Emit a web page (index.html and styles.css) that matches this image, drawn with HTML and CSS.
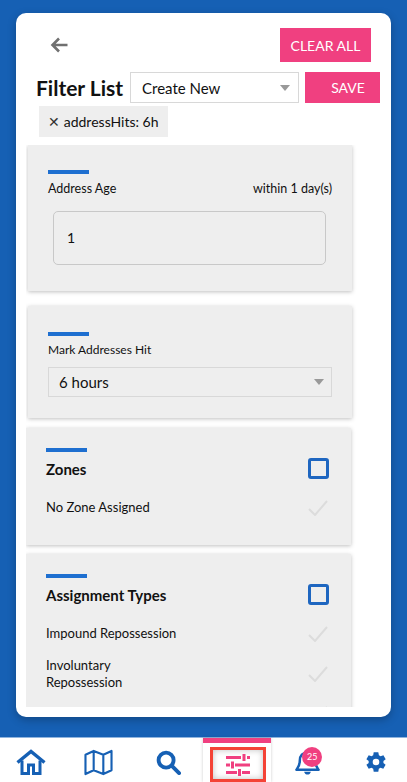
FILE: index.html
```html
<!DOCTYPE html>
<html lang="en">
<head>
  <meta charset="UTF-8" />
  <meta name="viewport" content="width=device-width, initial-scale=1.0" />
  <title>Filter List</title>
  <link rel="stylesheet" href="styles.css">
</head>
<body>
  <div class="screen">
    <main class="panel">
      <div class="top-row">
        <svg class="back" viewBox="0 0 18 16" width="18" height="16"><path d="M17.500 8H2.500M9 1.500 2.500 8 9 14.500" fill="none" stroke="#707070" stroke-width="2.600"/></svg>
        <button class="btn btn-clear">CLEAR ALL</button>
      </div>
      <div class="filter-row">
        <h1 class="filter-title">Filter List</h1>
        <div class="select select-new">
          <span>Create New</span>
          <i class="caret"></i>
        </div>
        <button class="btn btn-save">SAVE</button>
      </div>
      <div class="chip"><span class="chip-x">✕</span><span>addressHits: 6h</span></div>

      <div class="list">
        <section class="card card-age">
          <div class="bar"></div>
          <div class="label-row"><span>Address Age</span><span>within 1 day(s)</span></div>
          <div class="age-input">1</div>
        </section>

        <section class="card card-hit">
          <div class="bar"></div>
          <div class="label-row label-hit"><span>Mark Addresses Hit</span></div>
          <div class="select select-hours">
            <span>6 hours</span>
            <i class="caret"></i>
          </div>
        </section>

        <section class="card card-check card-zones">
          <div class="bar"></div>
          <div class="check-head"><h2>Zones</h2><i class="box"></i></div>
          <div class="check-row">
            <span>No Zone Assigned</span>
            <svg class="tick" viewBox="0 0 20 16" width="20" height="16"><path d="M1 9l6 6L19 1" fill="none" stroke="#dcdcdc" stroke-width="2"/></svg>
          </div>
        </section>

        <section class="card card-check card-types">
          <div class="bar"></div>
          <div class="check-head"><h2>Assignment Types</h2><i class="box"></i></div>
          <div class="check-row">
            <span>Impound Repossession</span>
            <svg class="tick" viewBox="0 0 20 16" width="20" height="16"><path d="M1 9l6 6L19 1" fill="none" stroke="#dcdcdc" stroke-width="2"/></svg>
          </div>
          <div class="check-row">
            <span>Involuntary<br>Repossession</span>
            <svg class="tick" viewBox="0 0 20 16" width="20" height="16"><path d="M1 9l6 6L19 1" fill="none" stroke="#dcdcdc" stroke-width="2"/></svg>
          </div>
          <div class="check-row">
            <span></span>
            <svg class="tick" viewBox="0 0 20 16" width="20" height="16"><path d="M1 9l6 6L19 1" fill="none" stroke="#dcdcdc" stroke-width="2"/></svg>
          </div>
        </section>
      </div>
    </main>
  </div>

  <nav class="tabs">
    <a class="tab">
      <svg viewBox="0 0 30 26" width="30" height="26"><path d="M1.500 13.500 15 2.500l13.500 11" fill="none" stroke="#1660b4" stroke-width="3.400"/><path d="M6 11.500V24.500h6.500V16h5v8.500H24V11.500" fill="none" stroke="#1660b4" stroke-width="3"/></svg>
    </a>
    <a class="tab">
      <svg viewBox="0 0 30 28" width="29" height="27"><path d="M1.500 6 10 2l10 4 8.500-4v20L20 26l-10-4-8.500 4zM10 2v20M20 6v20" fill="none" stroke="#1660b4" stroke-width="2.200" stroke-linejoin="round"/></svg>
    </a>
    <a class="tab">
      <svg viewBox="0 0 26 26" width="25" height="25"><circle cx="10.500" cy="10.500" r="7.800" fill="none" stroke="#1660b4" stroke-width="4"/><path d="M16.500 16.500 24 24" stroke="#1660b4" stroke-width="4" stroke-linecap="round"/></svg>
    </a>
    <a class="tab tab-active">
      <span class="focus">
        <svg viewBox="0 0 24 24" width="24" height="24"><path d="M0 4.500h15M21 4.500h3M0 12h4M9 12h15M0 19.500h11M16 19.500h8M18 1v7M6.500 8.500v7M13.500 16v7" fill="none" stroke="#f04080" stroke-width="3"/></svg>
      </span>
    </a>
    <a class="tab tab-bell">
      <svg viewBox="0 0 26 26" width="25" height="25"><path d="M13 2.500c-5 0-8 3.500-8 8.500 0 5.500-2 7.500-3.500 9.500h23C23 18.500 21 16.500 21 11c0-5-3-8.500-8-8.500z" fill="none" stroke="#1660b4" stroke-width="2.600" stroke-linejoin="round"/><path d="M9.500 22.500c.5 2 2 3 3.500 3s3-1 3.500-3z" fill="#1660b4"/></svg>
      <span class="badge">25</span>
    </a>
    <a class="tab tab-gear">
      <svg viewBox="0 0 24 24" width="24" height="24"><path fill="#1660b4" fill-rule="evenodd" d="M19.400 13a7.600 7.600 0 0 0 0-2l2.300-1.800-2.300-4-2.800 1.100a7.600 7.600 0 0 0-1.700-1L14.300 2.300H9.700l-.5 3a7.600 7.600 0 0 0-1.700 1L4.700 5.200l-2.300 4L4.700 11a7.600 7.600 0 0 0 0 2l-2.300 1.800 2.300 4 2.800-1.100a7.600 7.600 0 0 0 1.700 1l.5 3h4.600l.5-3a7.600 7.600 0 0 0 1.700-1l2.800 1.100 2.300-4zM12 15.300a3.300 3.300 0 1 1 0-6.600 3.300 3.300 0 0 1 0 6.600z"/></svg>
    </a>
  </nav>
</body>
</html>
```
FILE: styles.css
```css
* {
  box-sizing: border-box;
}
html, body {
  margin: 0;
  height: 100%;
}
body {
  width: 407px;
  height: 782px;
  overflow: hidden;
  font-family: Lato, "Open Sans", sans-serif;
  color: #111;
  background: #1660b4;
  display: flex;
  flex-direction: column;
}
.screen {
  height: 737px;
  padding: 13px 16px 20px;
}
.panel {
  height: 704px;
  background: #fff;
  border-radius: 10px;
  box-shadow: 0 3px 8px rgba(0, 0, 0, 0.25);
  padding: 15px 0 10px 10px;
  display: flex;
  flex-direction: column;
  overflow: hidden;
}
.top-row {
  display: flex;
  justify-content: space-between;
  align-items: center;
  height: 34px;
  padding: 0 20px 0 24px;
}
.btn {
  border: none;
  background: #f04080;
  color: #fff;
  font-family: inherit;
  font-size: 14px;
  padding: 0;
  height: 34px;
}
.btn-clear {
  width: 91px;
}
.filter-row {
  display: flex;
  align-items: center;
  margin-top: 10px;
  height: 31px;
  padding-left: 10px;
}
.filter-title {
  margin: 0;
  font-size: 21px;
  font-weight: 700;
  width: 94px;
  white-space: nowrap;
}
.select {
  display: flex;
  align-items: center;
  justify-content: space-between;
  border: 1px solid #d8d8d8;
}
.select-new {
  width: 169px;
  height: 31px;
  padding: 0 8px 0 11px;
  font-size: 15px;
  background: #fff;
}
.caret {
  width: 0;
  height: 0;
  border-left: 5.500px solid transparent;
  border-right: 5.500px solid transparent;
  border-top: 6px solid #999;
}
.btn-save {
  width: 75px;
  height: 31px;
  margin-left: 6px;
  padding-left: 11px;
}
.chip {
  align-self: flex-start;
  margin: 3px 0 0 13px;
  width: 129px;
  height: 31px;
  background: #eee;
  font-size: 14px;
  padding-left: 9px;
  white-space: nowrap;
  display: flex;
  align-items: center;
  gap: 4px;
}
.chip-x {
  font-family: "DejaVu Sans", sans-serif;
  font-size: 14px;
  color: #333;
}
.list {
  flex: 1;
  margin-top: 8px;
  overflow: hidden;
  display: flex;
  flex-direction: column;
}
.card {
  flex: none;
  background: #eee;
  width: 324px;
  margin-left: 2px;
  box-shadow: 0 1px 4px rgba(0, 0, 0, 0.25);
  padding: 25px 20px 0;
}
.bar {
  width: 41px;
  height: 4px;
  background: #1e6fd0;
}
.label-row {
  display: flex;
  justify-content: space-between;
  font-size: 12.500px;
  margin-top: 6px;
  line-height: 17px;
}
.label-hit {
  font-size: 12px;
  margin-top: 5px;
}
.card-age {
  height: 146px;
}
.age-input {
  width: 273px;
  height: 54px;
  margin: 14px 0 0 5px;
  border: 1px solid #c8c8c8;
  border-radius: 5px;
  padding-left: 13px;
  line-height: 52px;
  font-size: 14px;
}
.card-hit {
  height: 112px;
  margin-top: 15px;
  padding-top: 26px;
}
.select-hours {
  height: 30px;
  margin-top: 9px;
  padding: 0 7px 0 10px;
  font-size: 15px;
  border-width: 1.500px;
}
.card-check {
  width: 325px;
  margin-left: 0;
  padding: 20px 20px 0 20px;
}
.card-zones {
  height: 117px;
  margin-top: 10px;
}
.card-types {
  margin-top: 9px;
  height: 200px;
}
.check-head {
  display: flex;
  justify-content: space-between;
  align-items: center;
  padding-right: 2px;
  margin-top: 6px;
  height: 21px;
}
.check-head h2 {
  margin: 0;
  font-size: 15px;
  font-weight: 700;
}
.box {
  width: 21px;
  height: 21px;
  border: 3px solid #1e66c0;
  border-radius: 3px;
}
.check-row {
  display: flex;
  justify-content: space-between;
  align-items: center;
  padding-right: 3px;
  font-size: 13px;
  line-height: 17px;
  margin-top: 20px;
}
.check-row + .check-row {
  margin-top: 15px;
}
.tabs {
  flex: 1;
  background: #fff;
  display: flex;
  border-top: 1px solid #8fb4de;
}
.tab {
  position: relative;
  width: 66px;
  padding-top: 4px;
  display: flex;
  align-items: center;
  justify-content: center;
}
.tab:nth-child(1) { width: 63px; }
.tab:nth-child(2) { width: 72px; }
.tab:nth-child(3) { width: 68px; }
.tab-active {
  width: 69px !important;
  border-top: 5px solid #f04080;
  box-shadow: 0 0 3px rgba(0, 0, 0, 0.2);
  align-items: flex-start;
}
.focus {
  width: 56px;
  height: 35px;
  margin-left: 3px;
  border: 3px solid #f44336;
  box-shadow: inset 0 0 6px rgba(0, 0, 0, 0.25);
  display: flex;
  align-items: center;
  justify-content: center;
}
.tab-bell {
  width: 70px;
  padding-left: 3px;
}
.tab-gear {
  padding-left: 3px;
}
.badge {
  position: absolute;
  top: 9px;
  left: 31px;
  width: 20px;
  height: 20px;
  border-radius: 50%;
  background: #f04080;
  color: #fff;
  font-size: 9px;
  line-height: 20px;
  text-align: center;
}
```
